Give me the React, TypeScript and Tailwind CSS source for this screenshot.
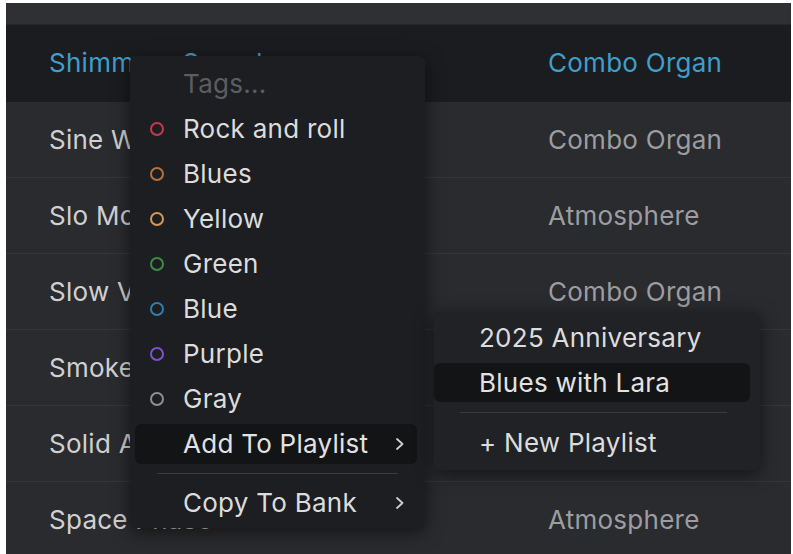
import React from "react";

const font = { fontFamily: "Inter, 'Noto Sans', sans-serif" };

const rows = [
  { name: "Sine Wave", type: "Combo Organ" },
  { name: "Slo Motion", type: "Atmosphere" },
  { name: "Slow Vibes", type: "Combo Organ" },
  { name: "Smoke Signals", type: "Pad" },
  { name: "Solid Air", type: "Bass" },
  { name: "Space Phase", type: "Atmosphere" },
];

const tags = [
  { label: "Rock and roll", ring: "border-[#c23a4c]" },
  { label: "Blues", ring: "border-[#b8703e]" },
  { label: "Yellow", ring: "border-[#d39a52]" },
  { label: "Green", ring: "border-[#3f8a45]" },
  { label: "Blue", ring: "border-[#2c7fae]" },
  { label: "Purple", ring: "border-[#7a52d0]" },
  { label: "Gray", ring: "border-[#8e8f93]" },
];

const Chevron = () => (
  <svg width="10" height="14" viewBox="0 0 10 14" fill="none">
    <path d="M2 2l5.5 5L2 12" stroke="#cfcfd1" strokeWidth="1.8" strokeLinecap="round" strokeLinejoin="round" />
  </svg>
);

const TagMenu: React.FC = () => (
  <div className="absolute left-[124px] top-[53px] w-[295px] rounded-md bg-[#1d1e21] pt-[5px] pb-[3px] shadow-[0_4px_18px_rgba(0,0,0,0.55)]">
    <div className="h-[45px] flex items-center pl-[53px] text-[#5c5d61]">Tags...</div>
    {tags.map((t) => (
      <div key={t.label} className="h-[45px] flex items-center pl-[20px] text-[#dcdcdd]">
        <span className={`w-[14px] h-[14px] rounded-full border-[2.5px] ${t.ring}`} />
        <span className="ml-[19px]">{t.label}</span>
      </div>
    ))}
    <div className="h-[45px] flex items-center">
      <div className="ml-[5px] mr-[8px] h-[40px] flex-1 rounded-md bg-[#131416] flex items-center justify-between pl-[48px] pr-[12px] text-[#e2e2e3]">
        <span>Add To Playlist</span>
        <Chevron />
      </div>
    </div>
    <div className="h-[14px] flex items-center px-[27px]">
      <div className="h-px flex-1 bg-[#3a3b3f]" />
    </div>
    <div className="h-[45px] flex items-center justify-between pl-[53px] pr-[20px] text-[#dcdcdd]">
      <span>Copy To Bank</span>
      <Chevron />
    </div>
  </div>
);

const PlaylistMenu: React.FC = () => (
  <div className="absolute left-[428px] top-[309px] w-[326px] rounded-md bg-[#212225] pt-[3px] pb-[5px] shadow-[0_4px_18px_rgba(0,0,0,0.55)]">
    <div className="h-[45px] flex items-center pl-[45px] text-[#dcdcdd]">2025 Anniversary</div>
    <div className="h-[45px] flex items-center">
      <div className="ml-[0px] mr-[10px] h-[39px] flex-1 rounded-md bg-[#131416] flex items-center pl-[45px] text-[#e2e2e3]">
        Blues with Lara
      </div>
    </div>
    <div className="h-[15px] flex items-center pl-[26px] pr-[33px]">
      <div className="h-px flex-1 bg-[#3a3b3f]" />
    </div>
    <div className="h-[45px] flex items-center pl-[45px] text-[#dcdcdd]">+ New Playlist</div>
  </div>
);

export default function App() {
  return (
    <div className="w-[793px] h-[554px] bg-white pt-[3px] pl-[6px] pr-[2px] overflow-hidden" style={font}>
      <div className="relative h-[551px] bg-[#2a2b2f] overflow-hidden text-[26px] leading-none tracking-[0.01em]">
        <div className="h-[22px] bg-[#2f3034] border-b border-[#26272a]" />
        <div className="h-[77px] bg-[#1b1c1f] flex items-center pl-[43px] pb-[1px] text-[#3f9fcb]">
          <span className="w-[499px]">Shimmery Sound</span>
          <span>Combo Organ</span>
        </div>
        {rows.map((r) => (
          <div
            key={r.name}
            className="h-[76px] flex items-center border-b border-[#35363a] pl-[43px]"
          >
            <span className="w-[499px] text-[#d0d0d1]">{r.name}</span>
            <span className="text-[#9c9da0]">{r.type}</span>
          </div>
        ))}
        <TagMenu />
        <PlaylistMenu />
      </div>
    </div>
  );
}
